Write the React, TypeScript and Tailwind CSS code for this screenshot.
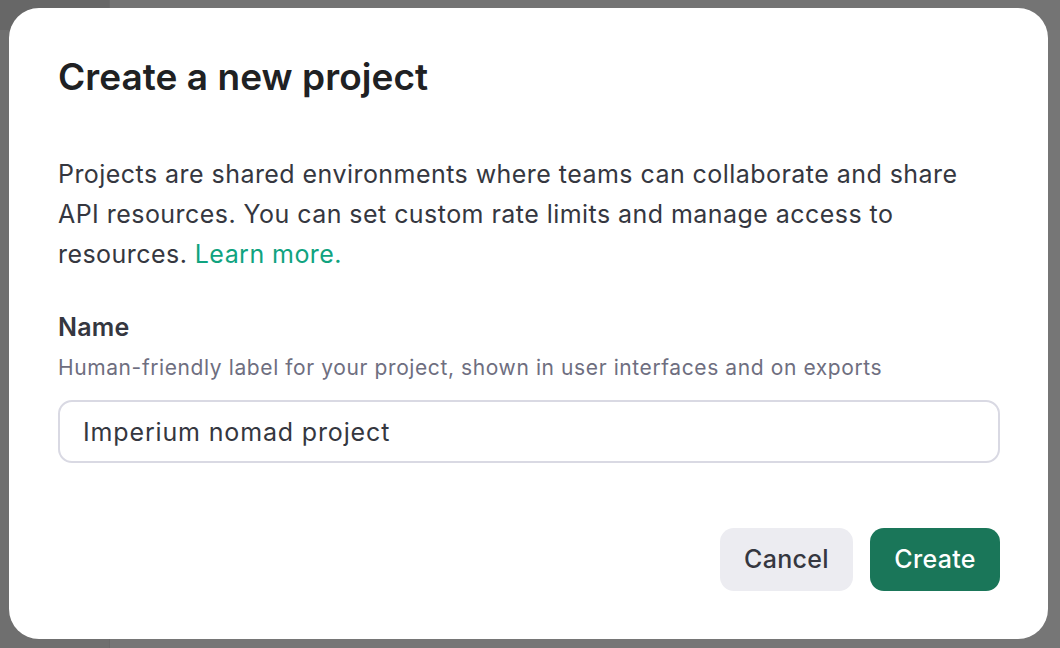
import React, { useState } from 'react'

const App = () => {
    const [name, setName] = useState('Imperium nomad project');

    return (
        <div
            className="relative w-full h-[648px] overflow-hidden bg-[#767676]"
            style={{ fontFamily: 'Inter, "Noto Sans", sans-serif' }}
        >
            {/* dimmed page behind the dialog */}
            <div className="flex h-full">
                <aside className="w-[110px] h-full flex flex-col bg-[#6f6f6f] border-r border-[#6a6a6a]">
                    <div className="h-[30px] bg-[#676767]" />
                </aside>
                <div className="flex-1 flex flex-col">
                    <div className="h-[30px] bg-[#747474]" />
                </div>
            </div>

            <div className="absolute left-[9px] top-[8px] w-[1039px] h-[631px] bg-white rounded-[30px] pl-[49px] pr-[48px] pt-[45px] flex flex-col">
                <h1 className="text-[37px] leading-[48px] font-semibold tracking-[0.05px] text-[#202123]">
                    Create a new project
                </h1>

                <p className="mt-[53px] w-[925px] text-[25px] leading-[40px] text-[#353740] tracking-[0.45px]">
                    Projects are shared environments where teams can collaborate and share API resources. You can set custom rate limits and manage access to resources.{' '}
                    <a className="text-[#10a37f]" href="#">Learn more.</a>
                </p>

                <label className="mt-[37px] text-[25px] leading-[32px] font-semibold tracking-[0.2px] text-[#353740]">
                    Name
                </label>
                <span className="mt-[11px] text-[21px] leading-[28px] tracking-[0.6px] text-[#6e6e80]">
                    Human-friendly label for your project, shown in user interfaces and on exports
                </span>

                <input
                    className="mt-[18px] w-full h-[63px] rounded-[14px] border-2 border-[#d9d9e3] px-[23px] text-[25px] tracking-[0.85px] text-[#353740] outline-none"
                    value={name}
                    onChange={(e) => setName(e.target.value)}
                />

                <div className="mt-[65px] flex justify-end gap-[17px]">
                    <button className="h-[63px] w-[133px] rounded-[14px] bg-[#ececf1] text-[25px] font-medium tracking-[0.3px] text-[#353740]">
                        Cancel
                    </button>
                    <button className="h-[63px] w-[130px] rounded-[14px] bg-[#1a7659] text-[25px] font-medium tracking-[0.3px] text-white">
                        Create
                    </button>
                </div>
            </div>
        </div>
    )
}
export default App
